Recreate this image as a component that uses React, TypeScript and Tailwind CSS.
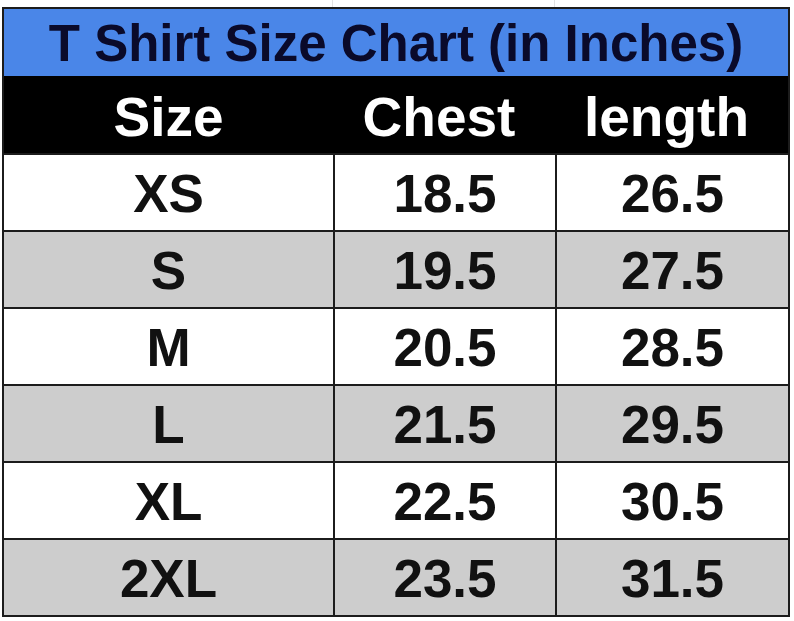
import React from "react";

const rows = [
  ["XS", "18.5", "26.5"],
  ["S", "19.5", "27.5"],
  ["M", "20.5", "28.5"],
  ["L", "21.5", "29.5"],
  ["XL", "22.5", "30.5"],
  ["2XL", "23.5", "31.5"],
];

export default function App() {
  return (
    <div
      className="w-[794px] h-[621px] bg-white overflow-hidden"
      style={{ fontFamily: '"Liberation Sans", Arial, sans-serif' }}
    >
      {/* faint spreadsheet gridlines above the table */}
      <div className="flex h-[7px] pl-[4px]">
        <div className="w-[329px] border-r border-[#e2e2e2]" />
        <div className="w-[222px] border-r border-[#e2e2e2]" />
      </div>
      <div className="ml-[2px] w-[788px] border-2 border-[#1c1c1c]">
        <div className="h-[67px] bg-[#4a86e8] flex items-center justify-center text-[51px] font-bold leading-none text-[#0a0a2a] pt-[2px]">
          T Shirt Size Chart (in Inches)
        </div>
        <div className="h-[77px] bg-black grid grid-cols-[329px_222px_233px] text-white text-[55px] font-bold leading-none">
          <div className="flex items-center justify-center pt-[6px]">Size</div>
          <div className="flex items-center justify-center pt-[6px] pr-[10px]">Chest</div>
          <div className="flex items-center justify-center pt-[6px] pr-[10px]">length</div>
        </div>
        {rows.map((r, i) => (
          <div
            key={r[0]}
            className={`h-[77px] grid grid-cols-[329px_222px_233px] border-t-2 border-[#1c1c1c] text-[53px] font-bold leading-none text-[#111111] ${
              i % 2 === 1 ? "bg-[#cdcdcd]" : "bg-white"
            }`}
          >
            <div className="flex items-center justify-center pt-[2px]">{r[0]}</div>
            <div className="flex items-center justify-center border-l-2 border-[#1c1c1c] pt-[2px]">{r[1]}</div>
            <div className="flex items-center justify-center border-l-2 border-[#1c1c1c] pt-[2px]">{r[2]}</div>
          </div>
        ))}
      </div>
    </div>
  );
}
